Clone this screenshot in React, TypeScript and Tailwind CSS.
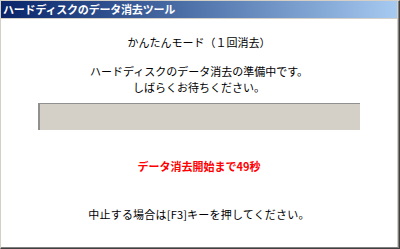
export default function App() {
  return (
    <div
      className="w-[400px] h-[249px] border-t border-l border-t-[#d4d0c8] border-l-[#d4d0c8] border-r border-b border-r-[#404040] border-b-[#404040] bg-[#d4d0c8]"
      style={{ fontFamily: '"Noto Sans CJK JP", "Noto Sans", sans-serif' }}
    >
      <div className="h-full flex flex-col border-r border-b border-[#808080] pr-px">
        <div className="h-[17px] shrink-0 flex items-center pl-[2px] bg-gradient-to-r from-[#0a246a] to-[#a6caf0]">
          <span className="text-[11px] leading-none font-bold text-white tracking-[-0.2px]">
            ハードディスクのデータ消去ツール
          </span>
        </div>
        <div className="h-px shrink-0" />
        <div className="flex-1 bg-white flex flex-col items-center text-[11px] text-black">
          <p className="mt-[16px] leading-[14px]">かんたんモード（１回消去）</p>
          <div className="mt-[14px] leading-[16px] text-center">
            <p>ハードディスクのデータ消去の準備中です。</p>
            <p>しばらくお待ちください。</p>
          </div>
          <div className="mt-[8px] w-[322px] h-[27px] bg-[#d4d0c8] border-t border-l-2 border-[#909090]" />
          <p className="mt-[29px] leading-[14px] font-bold text-[#ff0000]">データ消去開始まで49秒</p>
          <p className="mt-[34px] leading-[14px] tracking-[0.2px]">中止する場合は[F3]キーを押してください。</p>
        </div>
      </div>
    </div>
  );
}
